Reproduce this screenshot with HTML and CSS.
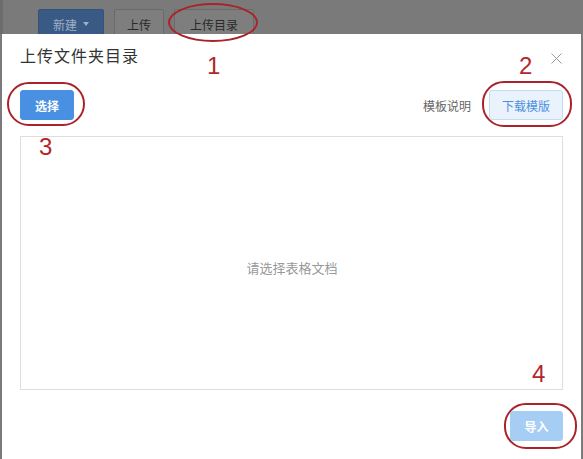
FILE: index.html
```html
<!DOCTYPE html>
<html lang="zh">
<head>
<meta charset="utf-8">
<title>上传文件夹目录</title>
<link rel="stylesheet" href="styles.css">
</head>
<body>
<div class="page">
  <div class="topbar">
    <span class="tb-btn tb-primary">新建 <span class="caret"></span></span>
    <span class="tb-btn tb-upload">上传</span>
    <span class="tb-btn tb-dir">上传目录</span>
  </div>
  <div class="modal">
    <div class="modal-head">
      <h1 class="modal-title">上传文件夹目录</h1>
      <span class="close">
        <svg width="11" height="11" viewBox="0 0 11 11"><path d="M0.5 0.5 L10.5 10.5 M10.5 0.5 L0.5 10.5" stroke="#9a9a9a" stroke-width="1" fill="none"/></svg>
      </span>
    </div>
    <div class="toolbar">
      <button class="btn btn-select">选择</button>
      <div class="tools-right">
        <span class="tpl-help">模板说明</span>
        <button class="btn btn-download">下载模版</button>
      </div>
    </div>
    <div class="dropbox">
      <span class="placeholder">请选择表格文档</span>
    </div>
    <div class="footer">
      <button class="btn btn-import">导入</button>
    </div>
  </div>

  <div class="mark ring ring-1"></div>
  <div class="mark ring ring-2"></div>
  <div class="mark ring ring-3"></div>
  <div class="mark ring ring-4"></div>
  <span class="mark num num-1">1</span>
  <span class="mark num num-2">2</span>
  <span class="mark num num-3">3</span>
  <span class="mark num num-4">4</span>
</div>
</body>
</html>
```

FILE: styles.css
```css
* { box-sizing: border-box; }
html, body { margin: 0; padding: 0; }
body {
  background: #7b7b7b;
  font-family: "Noto Sans CJK SC", "Noto Sans", sans-serif;
  width: 583px;
  height: 459px;
  overflow: hidden;
}
.page {
  position: relative;
  width: 583px;
  height: 459px;
  display: flex;
  flex-direction: column;
}
.topbar {
  height: 34px;
  flex: none;
  display: flex;
  gap: 10px;
  padding: 9px 0 0 38px;
  overflow: hidden;
  background: #7a7a7a;
  box-shadow: inset 3px 0 0 #6c6c6c;
}
.tb-btn {
  height: 30px;
  display: flex;
  align-items: center;
  justify-content: center;
  font-size: 12px;
  color: #2a2a2a;
  border: 1px solid #6a6a6a;
  border-radius: 2px;
  background: #7e7e7e;
}
.tb-primary {
  width: 66px;
  background: #395a85;
  border-color: #34527a;
  color: #9eb0c6;
  gap: 6px;
}
.caret {
  width: 0; height: 0;
  border-left: 3px solid transparent;
  border-right: 3px solid transparent;
  border-top: 4px solid #9eb0c6;
}
.tb-upload { width: 50px; }
.tb-dir { width: 80px; }

.modal {
  flex: 1;
  margin: 0 2px 0 2px;
  background: #fff;
  padding: 0 18px;
  display: flex;
  flex-direction: column;
}
.modal-head {
  display: flex;
  justify-content: space-between;
  align-items: flex-start;
  padding-top: 10px;
}
.modal-title {
  margin: 0;
  font-size: 16px;
  font-weight: 400;
  line-height: 22px;
  color: #333;
  letter-spacing: 1px;
}
.close {
  margin-top: 9px;
  margin-right: 1px;
  display: flex;
}
.toolbar {
  margin-top: 24px;
  display: flex;
  justify-content: space-between;
  align-items: center;
}
.tools-right {
  display: flex;
  align-items: center;
  gap: 18px;
}
.btn {
  font-family: inherit;
  font-size: 12px;
  height: 30px;
  border-radius: 3px;
  padding: 0;
  cursor: pointer;
}
.btn-select {
  width: 54px;
  background: #4a90e2;
  border: 1px solid #4a90e2;
  color: #fff;
  font-weight: 700;
}
.tpl-help {
  font-size: 12px;
  color: #666;
}
.btn-download {
  width: 74px;
  background: #eaf3fc;
  border: 1px solid #c3dcf4;
  color: #4a90e2;
}
.dropbox {
  margin-top: 16px;
  height: 254px;
  border: 1px solid #dedede;
  padding-top: 8px;
  display: flex;
  align-items: center;
  justify-content: center;
}
.placeholder {
  font-size: 13px;
  color: #999;
  margin-left: 1px;
}
.footer {
  margin-top: 21px;
  display: flex;
  justify-content: flex-end;
}
.btn-import {
  width: 53px;
  background: #a6cdf3;
  border: 1px solid #a6cdf3;
  color: #fff;
  font-weight: 700;
}

.mark { position: absolute; }
.ring {
  border: 2px solid #a9232a;
  border-radius: 50%;
}
.ring-1 { left: 168px; top: 3px; width: 90px; height: 39px; }
.ring-2 { left: 482px; top: 81px; width: 90px; height: 46px; border-radius: 22px; }
.ring-3 { left: 7px; top: 82px; width: 78px; height: 44px; border-radius: 22px; }
.ring-4 { left: 504px; top: 403px; width: 73px; height: 46px; border-radius: 22px; }
.num {
  font-family: "Liberation Sans", "DejaVu Sans", sans-serif;
  font-size: 24px;
  line-height: 24px;
  color: #b3262c;
}
.num-1 { left: 207px; top: 54px; }
.num-2 { left: 519px; top: 54px; }
.num-3 { left: 39px; top: 135px; }
.num-4 { left: 532px; top: 362px; }
```
